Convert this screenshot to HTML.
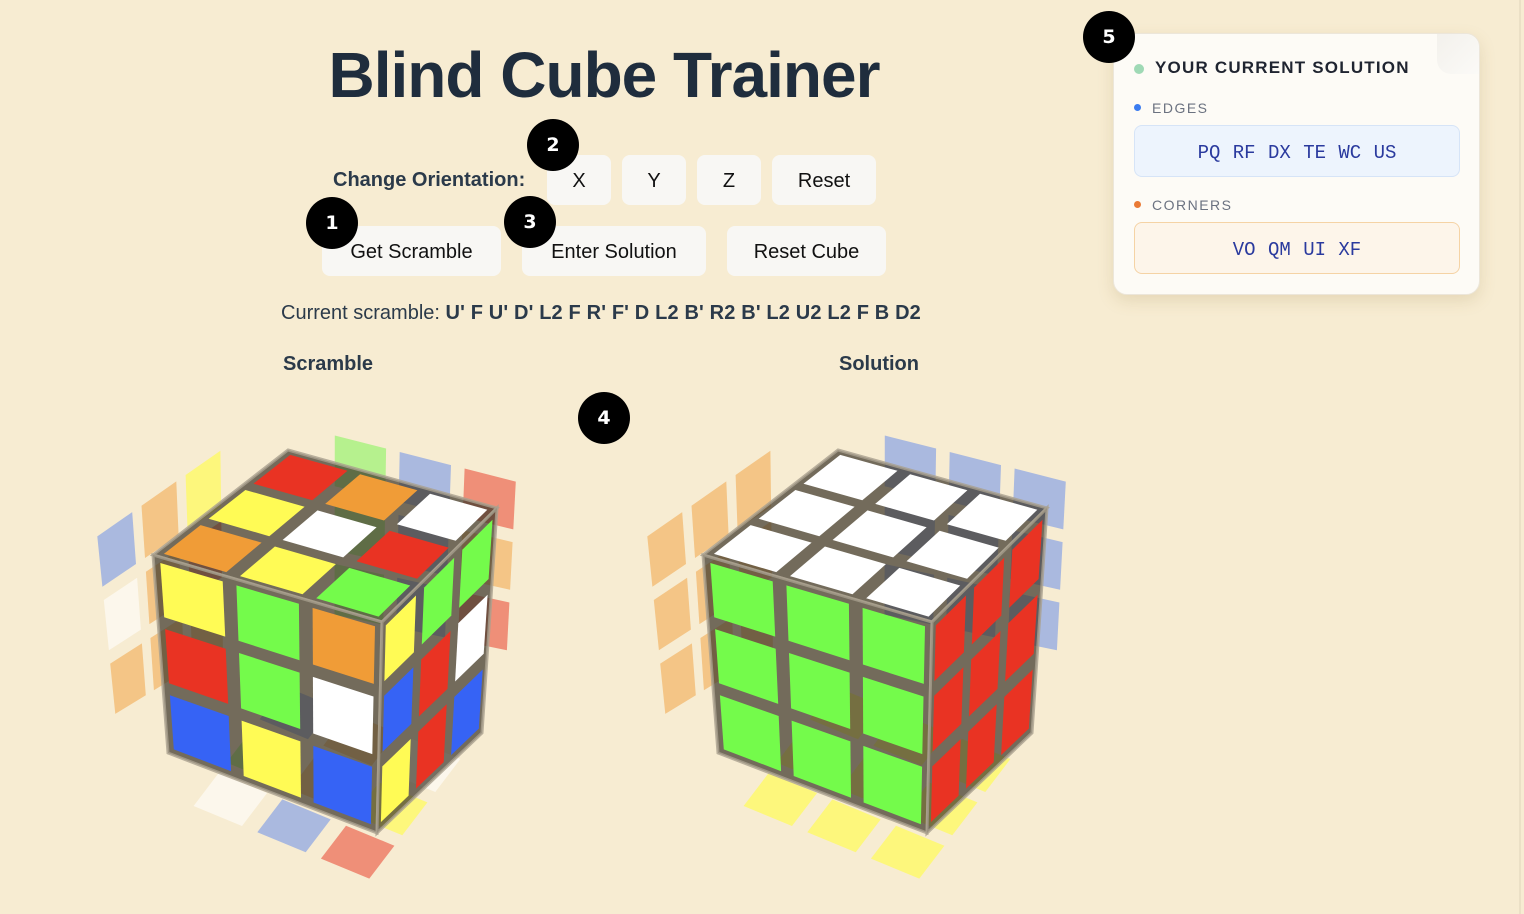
<!DOCTYPE html>
<html><head><meta charset="utf-8">
<style>
*{box-sizing:border-box;margin:0;padding:0}
body{width:1524px;height:914px;background:#f7ecd2;font-family:"Liberation Sans",sans-serif;position:relative;overflow:hidden;color:#1f2937}
.a{position:absolute}
h1{position:absolute;left:0;width:1208px;text-align:center;top:38px;font-size:64px;font-weight:700;color:#1f2d3d;letter-spacing:-1px}
.btn{position:absolute;background:#f8f7f4;border-radius:8px;font-size:20px;color:#111;display:flex;align-items:center;justify-content:center;padding-top:2px}
.lbl{font-weight:700;font-size:20px;color:#2b3a4a}
.num{position:absolute;width:52px;height:52px;border-radius:50%;background:#000;color:#fff;font-weight:900;font-size:19px;display:flex;align-items:center;justify-content:center;font-family:"DejaVu Sans",sans-serif}
.panel{position:absolute;left:1113px;top:33px;width:367px;height:262px;background:#fdfbf6;border-radius:14px;box-shadow:0 6px 16px rgba(150,120,60,.18);border:1px solid #ece6da}
.dot{position:absolute;width:8px;height:8px;border-radius:50%}
.box{position:absolute;left:20px;width:326px;height:52px;border-radius:8px;font-family:"Liberation Mono",monospace;font-size:19px;color:#2a3a9e;display:flex;align-items:center;justify-content:center;word-spacing:1px;padding-top:4px}
</style></head><body>
<h1>Blind Cube Trainer</h1>
<div class="a lbl" style="left:333px;top:169px">Change Orientation:</div>
<div class="btn" style="left:547px;top:155px;width:64px;height:50px">X</div>
<div class="btn" style="left:622px;top:155px;width:64px;height:50px">Y</div>
<div class="btn" style="left:697px;top:155px;width:64px;height:50px">Z</div>
<div class="btn" style="left:772px;top:155px;width:104px;height:50px">Reset</div>
<div class="btn" style="left:322px;top:226px;width:179px;height:50px">Get Scramble</div>
<div class="btn" style="left:522px;top:226px;width:184px;height:50px">Enter Solution</div>
<div class="btn" style="left:727px;top:226px;width:159px;height:50px">Reset Cube</div>
<div class="a" style="left:281px;top:302px;font-size:20px;color:#2b3a4a">Current scramble: <b style="letter-spacing:0.15px">U' F U' D' L2 F R' F' D L2 B' R2 B' L2 U2 L2 F B D2</b></div>
<div class="a lbl" style="left:283px;top:353px">Scramble</div>
<div class="a lbl" style="left:839px;top:353px">Solution</div>
<svg class="a" style="left:0;top:0" width="1524" height="914" id="sv"></svg>
<div class="num" style="left:306px;top:197px">1</div>
<div class="num" style="left:527px;top:119px">2</div>
<div class="num" style="left:504px;top:196px">3</div>
<div class="num" style="left:578px;top:392px">4</div>
<div class="panel">
 <div style="position:absolute;right:0;top:0;width:42px;height:40px;border-radius:0 14px 0 14px;background:linear-gradient(135deg,#f3f1ec,#fbfaf7)"></div>
 <div class="dot" style="left:20px;top:30px;width:10px;height:10px;background:#9fd9b5"></div>
 <div class="a" style="left:41px;top:24px;font-weight:700;font-size:17px;letter-spacing:1.2px;color:#1f2430">YOUR CURRENT SOLUTION</div>
 <div class="dot" style="left:20px;top:70px;width:7px;height:7px;background:#3b7cf0"></div>
 <div class="a" style="left:38px;top:66px;font-size:14px;letter-spacing:1.5px;color:#6b7280">EDGES</div>
 <div class="box" style="top:91px;background:#edf4fd;border:1px solid #d6e4f7">PQ RF DX TE WC US</div>
 <div class="dot" style="left:20px;top:167px;width:7px;height:7px;background:#ea7a35"></div>
 <div class="a" style="left:38px;top:163px;font-size:14px;letter-spacing:1.5px;color:#6b7280">CORNERS</div>
 <div class="box" style="top:188px;background:#fdf5ea;border:1px solid #f5d3a5">VO QM UI XF</div>
</div>
<div class="num" style="left:1083px;top:11px">5</div>
<div class="a" style="left:1519px;top:0;width:2px;height:914px;background:#ebe0c6"></div>
<script>
var sv=document.getElementById('sv'),h='';
var C={r:'#e93323',o:'#f09c37',y:'#fffb55',g:'#74fb4b',b:'#3663f5',w:'#ffffff'};
var G={r:'#ef8f78',o:'#f4c586',y:'#fdf77c',g:'#b6f18e',b:'#aab9df',w:'#fcf7ec'};
function P(p0,p1,p3,p2,u,v){
 var a=[p0[0]+(p1[0]-p0[0])*u,p0[1]+(p1[1]-p0[1])*u],b=[p3[0]+(p2[0]-p3[0])*u,p3[1]+(p2[1]-p3[1])*u];
 return [a[0]+(b[0]-a[0])*v,a[1]+(b[1]-a[1])*v];}
function poly(pts,f,o,s){h+='<polygon points="'+pts.map(function(p){return p[0].toFixed(1)+','+p[1].toFixed(1)}).join(' ')+'" fill="'+f+'"'+(o!=null?' fill-opacity="'+o+'"':'')+(s?' stroke="'+s+'" stroke-width="3" stroke-opacity="0.8"':'')+'/>';}
function face(q,cols,pal,ins,bg,op){
 if(bg)poly(q,bg,0.7,'#a9a08e');
 for(var r=0;r<3;r++)for(var c=0;c<3;c++){
  var k=cols[r*3+c];if(!k||k=='-')continue;
  var u0=c/3+ins,u1=(c+1)/3-ins,v0=r/3+ins,v1=(r+1)/3-ins;
  poly([P(q[0],q[1],q[3],q[2],u0,v0),P(q[0],q[1],q[3],q[2],u1,v0),P(q[0],q[1],q[3],q[2],u1,v1),P(q[0],q[1],q[3],q[2],u0,v1)],pal[k],op);}}
function off(q,dx){return q.map(function(p){return [p[0]+dx,p[1]]});}
function cube(dx,top,front,right,gl,gb,gf){
 face(off([[642,533],[775,440],[777,653],[662,723]],dx),gl,G,0.035,null,1);
 face(off([[878,427],[1073,477],[1063,658],[878,620]],dx),gb,G,0.035,null,1);
 face(off([[831,678],[1022,757],[923,887],[732,808]],dx),gf,G,0.04,null,1);
 face(off([[838,450],[1047,508],[932,622],[703,555]],dx),top,C,0.03,'#3a3428');
 face(off([[703,555],[932,622],[927,833],[718,753]],dx),front,C,0.03,'#3a3428');
 face(off([[932,622],[1047,508],[1032,733],[927,833]],dx),right,C,0.035,'#3a3428');
}
cube(-550,'rowywroyg','ygorgwbyb','yggbrwyrb','boyworooo','gbrgbogbr','bowgoywbr');
cube(0,'wwwwwwwww','ggggggggg','rrrrrrrrr','ooooooooo','bbbbbbbbb','yyyyyyyyy');
sv.innerHTML=h;
</script>
</body></html>
